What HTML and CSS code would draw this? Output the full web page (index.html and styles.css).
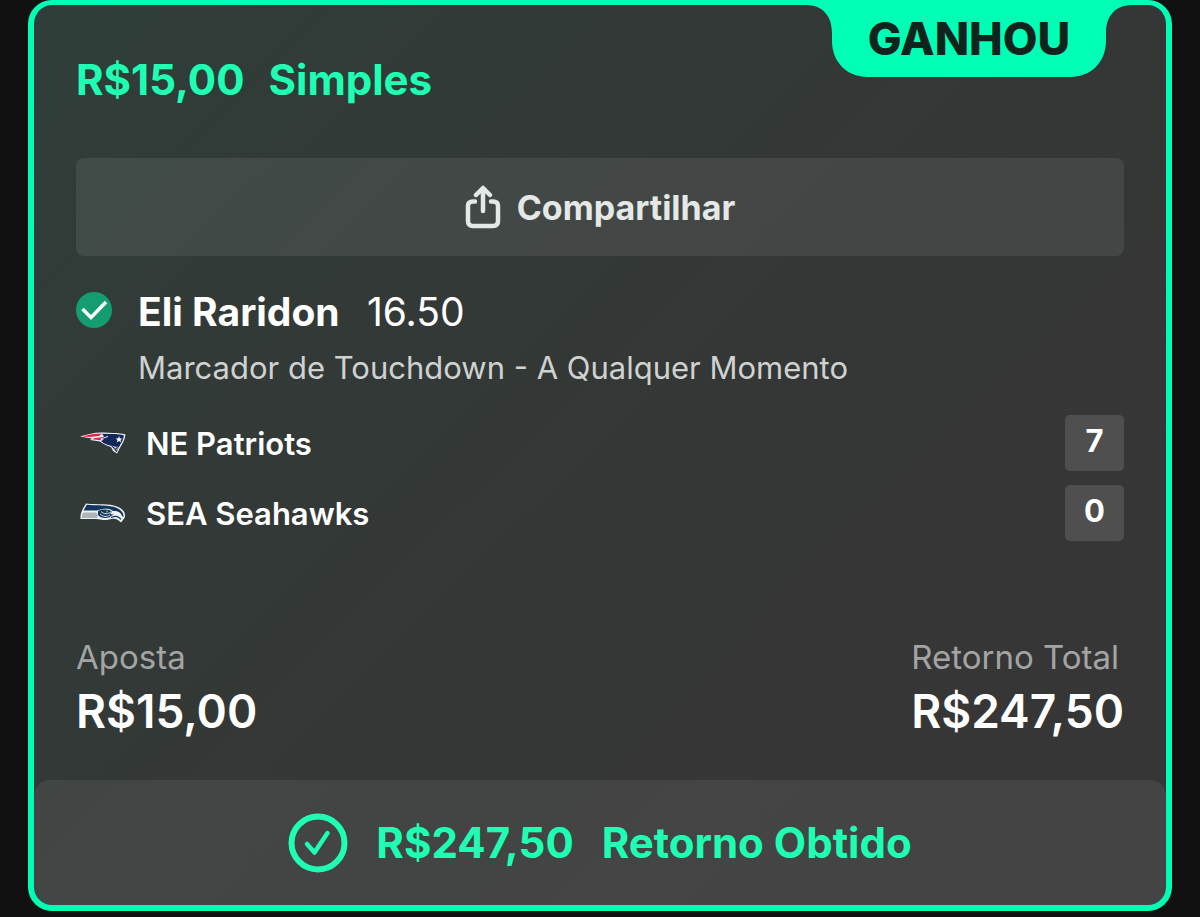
FILE: index.html
```
<!DOCTYPE html>
<html lang="pt-BR">
<head>
  <meta charset="UTF-8" />
  <meta name="viewport" content="width=device-width, initial-scale=1.0"/>
  <title>Aposta Simples</title>
  <link rel="stylesheet" href="styles.css">
</head>
<body>

  <main class="bet-card">
    <!-- Status tab -->
    <div class="status">
      <svg class="status-shape" viewBox="0 0 328 77" preserveAspectRatio="none" aria-hidden="true">
        <path d="M0 0V5C17 5 27 15 27 33V41C27 62 42 77 63 77H265C286 77 301 62 301 41V33C301 15 311 5 328 5V0Z" fill="#00ffb4"/>
      </svg>
      <span class="status-text">GANHOU</span>
    </div>

    <div class="bet-body">
      <h1 class="bet-title"><span>R$15,00</span><span>Simples</span></h1>

      <button type="button" class="share-btn">
        <svg class="share-icon" viewBox="0 0 36 44" aria-hidden="true">
          <path d="M10 16.500H8Q3 16.500 3 21V36Q3 41 8 41H28Q33 41 33 36V21Q33 16.500 28 16.500H26M18 26V4M11 10L18 3L25 10" fill="none" stroke="currentColor" stroke-width="4.500" stroke-linecap="round" stroke-linejoin="round"/>
        </svg>
        Compartilhar
      </button>

      <!-- Selection -->
      <section class="selection">
        <svg class="won-icon" viewBox="0 0 36 36" aria-hidden="true">
          <circle cx="18" cy="18" r="18" fill="#149d70"/>
          <path d="M6.500 17L15 25.500L30 10" fill="none" stroke="#fff" stroke-width="3.500"/>
        </svg>
        <div class="selection-info">
          <h2 class="selection-name">Eli Raridon <span class="odds">16.50</span></h2>
          <p class="market">Marcador de Touchdown - A Qualquer Momento</p>
        </div>
      </section>

      <!-- Teams and score -->
      <ul class="teams">
        <li class="team">
          <svg class="team-logo" viewBox="0 0 46 24" aria-hidden="true">
            <path d="M0 5.500C8 3 16 1 24 1.500L33 2C38 2 42 2.500 45.500 3.500C45 8 43 12 41 15L37 22.500L33 20L31 16C27 15 23 13 20 10.500L10 9L12 7.500Z" fill="#f0f2f5"/>
            <path d="M22 2.800L33 3C37 3 41 3.500 44 4.500C43 9 42 12 39 15L37 16L32 15C28 14 24 13 21 10L24 8.500L19 7.500L24 5.500Z" fill="#12285a"/>
            <path d="M2 5.500C9 3.500 15 2.500 22 2.500L19 5L10 6ZM12 8.200L15 7L23 6.200L20 9.300Z" fill="#dc2948"/>
            <path d="M21 7.800L28 5.500" fill="none" stroke="#f0f2f5" stroke-width="1"/>
            <path d="M39 5L39.900 7.500H42.500L40.500 9L41.200 11.500L39 10L36.800 11.500L37.500 9L35.500 7.500H38.100Z" fill="#fff"/>
            <path d="M32 15.500L36 17L40 14.500L37 21L34 19Z" fill="#8f98a5"/>
            <path d="M31.500 15L35.500 18L40 14M35.500 18L36.500 21" fill="none" stroke="#12285a" stroke-width="1"/>
          </svg>
          <span class="team-name">NE Patriots</span>
          <span class="score">7</span>
        </li>
        <li class="team">
          <svg class="team-logo" viewBox="0 0 46 24" aria-hidden="true">
            <path d="M6 2.500C17 4 29 2 37 5.500C43 8 46.500 12 44.500 17L41 21.500C38 18 35 17 31 18C26 20 21 18.500 16 18H0.500C0 12 3 7 6 2.500Z" fill="#eef2f5"/>
            <path d="M6.800 3.800C17 5 29 3.500 37 7C41 9 44 12 43.500 16L42 15C41 11 37 9.500 33 10C29 6.500 23 7.500 17 9.500H3.500Z" fill="#12365f"/>
            <path d="M3 11.500H16L18 14L17 17H1.700Q1.600 14 3 11.500Z" fill="#aeb4b9"/>
            <path d="M18 10C23 8 29 8 32 11C29 13 31 14 34 13L29 16.500C24 17.500 20 16.500 18 14Z" fill="#12365f"/>
            <path d="M21 10.500C24 13.500 28 13 31 11M20 13C23 16 27 16 30 14" fill="none" stroke="#dfe6ec" stroke-width="1"/>
            <circle cx="27" cy="10.500" r="1" fill="#82b64b"/>
            <path d="M31 16.500C36 14 39 15.500 41 18.500" fill="none" stroke="#12365f" stroke-width="1.200"/>
          </svg>
          <span class="team-name">SEA Seahawks</span>
          <span class="score">0</span>
        </li>
      </ul>

      <!-- Stake and return -->
      <dl class="totals">
        <div class="total">
          <dt>Aposta</dt>
          <dd>R$15,00</dd>
        </div>
        <div class="total">
          <dt>Retorno Total</dt>
          <dd>R$247,50</dd>
        </div>
      </dl>
    </div>

    <footer class="result">
      <svg class="result-icon" viewBox="0 0 60 60" aria-hidden="true">
        <circle cx="30" cy="30" r="26.500" fill="none" stroke="currentColor" stroke-width="6"/>
        <path d="M19 31L26.500 39.500L39.500 20" fill="none" stroke="currentColor" stroke-width="4.500" stroke-linecap="round" stroke-linejoin="round"/>
      </svg>
      <span>R$247,50</span>
      <span>Retorno Obtido</span>
    </footer>
  </main>

</body>
</html>
```

FILE: styles.css
```
* {
  margin: 0;
  padding: 0;
  box-sizing: border-box;
}
body {
  background-color: #111;
  font-family: Inter, "Liberation Sans", sans-serif;
  color: #fff;
}
.bet-card {
  position: relative;
  margin: 0 28px 6px;
  border: 6px solid #00ffb4;
  border-top-width: 5px;
  border-radius: 24px;
  background: linear-gradient(135deg, #2f3e3a 0%, #323a37 25%, #343735 55%, #363636 80%);
}
.status {
  position: absolute;
  top: -5px;
  right: 33px;
  width: 328px;
  height: 77px;
  display: flex;
  align-items: center;
  justify-content: center;
}
.status-shape {
  position: absolute;
  width: 100%;
  height: 100%;
}
.status-text {
  position: relative;
  color: #10231d;
  font-size: 45px;
  font-weight: 800;
}
.bet-body {
  padding: 49px 42px 39px;
}
.bet-title {
  display: flex;
  gap: 24px;
  color: #1fffb4;
  font-size: 42px;
  font-weight: 700;
  line-height: 52px;
}
.share-btn {
  display: flex;
  align-items: center;
  justify-content: center;
  gap: 16px;
  width: 100%;
  height: 98px;
  margin-top: 52px;
  border: none;
  border-radius: 8px;
  background-color: rgba(255, 255, 255, 0.08);
  color: #e4e8e6;
  font-family: inherit;
  font-size: 34px;
  font-weight: 700;
  cursor: pointer;
}
.share-icon {
  width: 36px;
  height: 44px;
}
.selection {
  display: flex;
  align-items: flex-start;
  gap: 26px;
  margin-top: 32px;
}
.won-icon {
  flex: none;
  width: 36px;
  height: 36px;
  margin-top: 4px;
}
.selection-name {
  font-size: 39px;
  font-weight: 700;
  line-height: 48px;
}
.odds {
  margin-left: 18px;
  font-weight: 400;
}
.market {
  margin-top: 12px;
  color: #d0d2d1;
  font-size: 31px;
  line-height: 40px;
}
.teams {
  display: grid;
  gap: 14px;
  margin-top: 27px;
  list-style: none;
}
.team {
  display: flex;
  align-items: center;
}
.team-logo {
  width: 46px;
  height: 24px;
  margin: 0 20px 0 4px;
}
.team-name {
  font-size: 31px;
  font-weight: 600;
}
.score {
  width: 59px;
  height: 56px;
  margin-left: auto;
  border-radius: 5px;
  background-color: #4f4f4f;
  font-size: 31px;
  font-weight: 700;
  line-height: 52px;
  text-align: center;
}
.totals {
  display: flex;
  justify-content: space-between;
  margin-top: 96px;
}
.total dt {
  color: #a3a5a4;
  font-size: 33px;
  line-height: 40px;
}
.total dd {
  font-size: 46px;
  font-weight: 600;
  line-height: 60px;
  margin-top: 4px;
}
.result {
  display: flex;
  align-items: center;
  justify-content: center;
  gap: 28px;
  height: 125px;
  border-radius: 16px;
  background-color: rgba(255, 255, 255, 0.07);
  color: #1fffb4;
  font-size: 42px;
  font-weight: 700;
}
.result-icon {
  width: 60px;
  height: 60px;
}
```
